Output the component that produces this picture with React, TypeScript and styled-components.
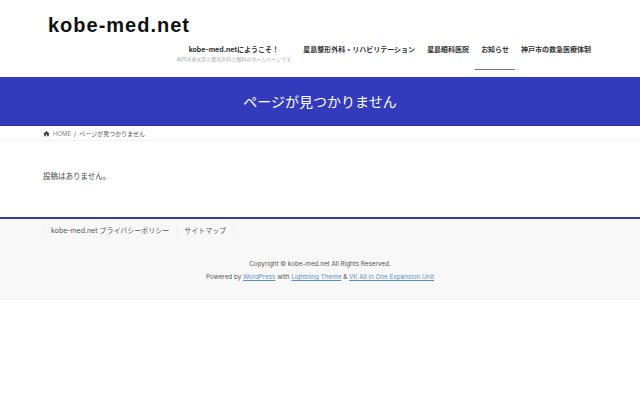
import React from 'react'
import styled, { createGlobalStyle } from 'styled-components'

const GlobalStyle = createGlobalStyle`
  html, body {
    margin: 0;
    padding: 0;
    background: #fff;
    font-family: "Inter", "Liberation Sans", "Noto Sans CJK JP", sans-serif;
    color: #333;
  }
  a { text-decoration: none; color: inherit; }
  ul { list-style: none; margin: 0; padding: 0; }
`

const Page = styled.div`
  width: 640px;
  height: 400px;
  overflow: hidden;
  background: #fff;
`

const Header = styled.header`
  height: 77px;
  box-sizing: border-box;
  display: flex;
  flex-direction: column;
  padding: 13px 43px 0 48px;
`

const Logo = styled.div`
  font-family: "Liberation Sans", sans-serif;
  font-weight: 700;
  font-size: 20px;
  line-height: 24px;
  letter-spacing: 1px;
  color: #111;
`

const Nav = styled.ul`
  display: flex;
  justify-content: flex-end;
  margin-top: 6px;
`

const NavItem = styled.li<{ $active?: boolean }>`
  display: flex;
  flex-direction: column;
  align-items: center;
  height: 27px;
  box-sizing: border-box;
  padding: 2px 6px 0;
  border-bottom: 1px solid ${(p) => (p.$active ? '#6a70bf' : 'transparent')};
`

const NavTitle = styled.span`
  font-size: 7px;
  line-height: 10px;
  font-weight: 700;
  color: #333;
  white-space: nowrap;
`

const NavSub = styled.span`
  font-size: 5px;
  line-height: 8px;
  color: #aaa;
  white-space: nowrap;
`

const Band = styled.div`
  height: 49px;
  background: #333bbd;
  border-bottom: 1px solid #2b32a8;
  box-sizing: border-box;
  display: flex;
  align-items: center;
  justify-content: center;
  color: #fff;
  font-size: 14px;
`

const Crumbs = styled.div`
  height: 15px;
  box-sizing: border-box;
  border-bottom: 1px solid #f4f4f4;
  padding: 1px 0 0 43px;
  display: flex;
  align-items: center;
  gap: 3px;
  font-size: 6px;
  color: #555;
`

const CrumbHome = styled.span`
  color: #888;
`

const Main = styled.main`
  height: 76px;
  box-sizing: border-box;
  padding: 30px 0 0 43px;
  font-size: 7.5px;
  line-height: 12px;
  color: #444;
`

const Footer = styled.footer`
  height: 83px;
  box-sizing: border-box;
  border-top: 2px solid #3b3f96;
  background: #f8f8f8;
`

const FootLinks = styled.ul`
  display: flex;
  padding: 7px 0 0 43px;
  font-size: 7px;
  line-height: 10px;
  color: #555;
`

const FootLink = styled.li`
  padding: 0 7px;
  border-left: 1px solid #eee;
  &:last-child {
    border-right: 1px solid #eee;
  }
`

const Copy = styled.div`
  margin-top: 22px;
  text-align: center;
  font-size: 6.3px;
  line-height: 13px;
  color: #555;
`

const CopyLink = styled.a`
  color: #5a90c8;
  text-decoration: underline;
`

const navItems = ['星島整形外科・リハビリテーション', '星島眼科医院', 'お知らせ', '神戸市の救急医療体制']

export default function App() {
  return (
    <Page>
      <GlobalStyle />
      <Header>
        <Logo>kobe-med.net</Logo>
        <Nav>
          <NavItem>
            <NavTitle>kobe-med.netにようこそ！</NavTitle>
            <NavSub>神戸市垂水区の整形外科と眼科のホームページです</NavSub>
          </NavItem>
          {navItems.map((n) => (
            <NavItem key={n} $active={n === 'お知らせ'}>
              <NavTitle>{n}</NavTitle>
            </NavItem>
          ))}
        </Nav>
      </Header>
      <Band>ページが見つかりません</Band>
      <Crumbs>
        <svg width="7" height="7" viewBox="0 0 24 24" fill="#444">
          <path d="M12 3 1 13h3v8h6v-6h4v6h6v-8h3z" />
        </svg>
        <CrumbHome>HOME</CrumbHome>
        <span>/</span>
        <span>ページが見つかりません</span>
      </Crumbs>
      <Main>投稿はありません。</Main>
      <Footer>
        <FootLinks>
          <FootLink>kobe-med.net プライバシーポリシー</FootLink>
          <FootLink>サイトマップ</FootLink>
        </FootLinks>
        <Copy>
          <div>Copyright © kobe-med.net All Rights Reserved.</div>
          <div>
            Powered by <CopyLink>WordPress</CopyLink> with <CopyLink>Lightning Theme</CopyLink> &amp;{' '}
            <CopyLink>VK All in One Expansion Unit</CopyLink>
          </div>
        </Copy>
      </Footer>
    </Page>
  )
}
